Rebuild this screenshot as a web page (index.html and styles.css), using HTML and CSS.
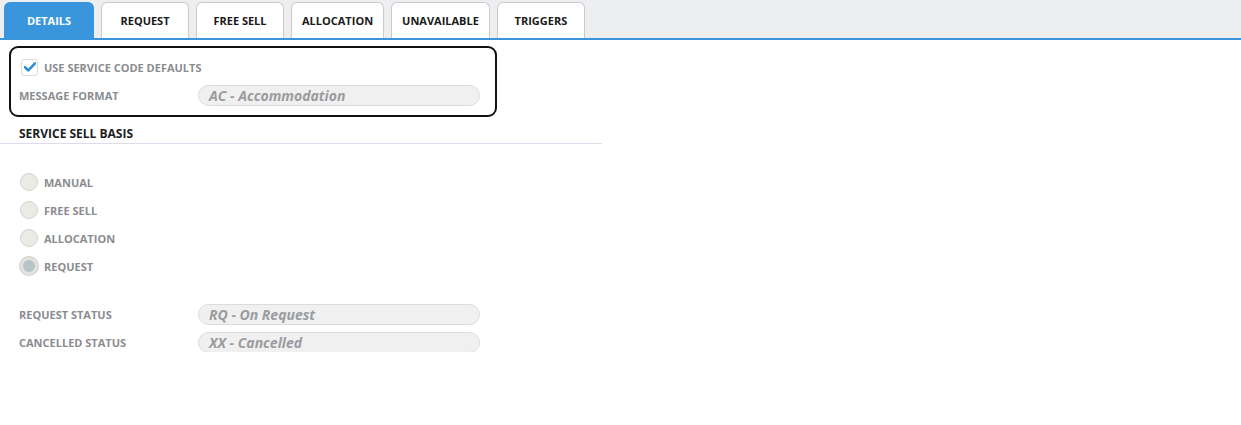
FILE: index.html
```html
<!DOCTYPE html>
<html lang="en">
<head>
    <meta charset="UTF-8">
    <title>Service Details</title>
    <link rel="stylesheet" href="styles.css">
</head>
<body>
<div class="tab-bar">
    <div class="tab active">DETAILS</div>
    <div class="tab">REQUEST</div>
    <div class="tab">FREE SELL</div>
    <div class="tab">ALLOCATION</div>
    <div class="tab">UNAVAILABLE</div>
    <div class="tab">TRIGGERS</div>
</div>

<div class="page">
    <div class="defaults-box">
        <label class="check-row">
            <span class="checkbox">
                <svg width="12" height="10" viewBox="0 0 12 10"><path d="M1 5.2 L4.3 8.4 L11 1.4" fill="none" stroke="#2f8fd8" stroke-width="2.6" stroke-linecap="round" stroke-linejoin="round"/></svg>
            </span>
            <span class="field-label">USE SERVICE CODE DEFAULTS</span>
        </label>
        <div class="field-row">
            <span class="field-label name">MESSAGE FORMAT</span>
            <div class="pill-input">AC - Accommodation</div>
        </div>
    </div>

    <div class="section-title">SERVICE SELL BASIS</div>

    <div class="radio-list">
        <div class="radio-row"><span class="radio"></span><span class="field-label">MANUAL</span></div>
        <div class="radio-row"><span class="radio"></span><span class="field-label">FREE SELL</span></div>
        <div class="radio-row"><span class="radio"></span><span class="field-label">ALLOCATION</span></div>
        <div class="radio-row"><span class="radio checked"></span><span class="field-label">REQUEST</span></div>
    </div>

    <div class="status-fields">
        <div class="field-row">
            <span class="field-label name">REQUEST STATUS</span>
            <div class="pill-input">RQ - On Request</div>
        </div>
        <div class="field-row">
            <span class="field-label name">CANCELLED STATUS</span>
            <div class="pill-input">XX - Cancelled</div>
        </div>
    </div>
</div>
</body>
</html>
```

FILE: styles.css
```css
body, html {
    font-family: 'Open Sans', 'Noto Sans', sans-serif;
    background-color: #ffffff;
    margin: 0;
    padding: 0;
    color: #1d1d1f;
}
.tab-bar {
    display: flex;
    align-items: flex-end;
    gap: 7px;
    height: 40px;
    padding: 0 0 0 4px;
    background-color: #eceef0;
    border-bottom: 2px solid #3a96dc;
    box-sizing: border-box;
}
.tab {
    height: 36px;
    display: flex;
    align-items: center;
    justify-content: center;
    padding: 0 10px;
    min-width: 88px;
    box-sizing: border-box;
    background-color: #ffffff;
    border: 1px solid #c9cccf;
    border-bottom: none;
    border-radius: 6px 6px 0 0;
    font-size: 11px;
    font-weight: 700;
    color: #1a1a1a;
}
.tab.active {
    background-color: #3a96dc;
    border-color: #3a96dc;
    color: #ffffff;
    min-width: 90px;
}
.page {
    padding: 6px 0 0 0;
}
.defaults-box {
    margin-left: 9px;
    width: 488px;
    height: 71px;
    box-sizing: border-box;
    border: 2px solid #111111;
    border-radius: 9px;
    padding: 10px 0 0 8px;
}
.field-label {
    font-size: 11px;
    font-weight: 700;
    color: #8a8c90;
}
.check-row {
    display: flex;
    align-items: center;
    gap: 6px;
    height: 18px;
    padding-left: 2px;
}
.checkbox {
    width: 17px;
    height: 17px;
    border: 1px solid #dcdcdc;
    border-radius: 3px;
    box-sizing: border-box;
    display: flex;
    align-items: center;
    justify-content: center;
}
.field-row {
    display: flex;
    align-items: center;
    height: 20px;
}
.defaults-box .field-row {
    margin-top: 9px;
}
.field-row .name {
    width: 179px;
}
.pill-input {
    width: 282px;
    height: 21px;
    box-sizing: border-box;
    border: 1px solid #dcdcdc;
    border-radius: 11px;
    background-color: #f0f0f0;
    padding: 0 10px;
    font-size: 14px;
    font-weight: 700;
    font-style: italic;
    color: #9a9c9f;
    line-height: 19px;
}
.section-title {
    font-size: 12px;
    font-weight: 700;
    color: #1d1d1f;
    padding: 8px 0 1px 19px;
    width: 602px;
    box-sizing: border-box;
    border-bottom: 1px solid #dedbea;
}
.radio-list {
    padding: 29px 0 0 20px;
    display: flex;
    flex-direction: column;
    gap: 10px;
}
.radio-row {
    display: flex;
    align-items: center;
    gap: 6px;
    height: 18px;
}
.radio {
    width: 18px;
    height: 18px;
    border-radius: 50%;
    box-sizing: border-box;
    border: 1px solid #d2d4d0;
    background-color: #ebebe5;
}
.radio.checked {
    border: 3px solid #e2e3df;
    background-color: #b6c4c6;
    box-shadow: 0 0 0 1px #cfd1cd;
}
.status-fields {
    padding: 29px 0 0 19px;
    display: flex;
    flex-direction: column;
    gap: 8px;
}
```
